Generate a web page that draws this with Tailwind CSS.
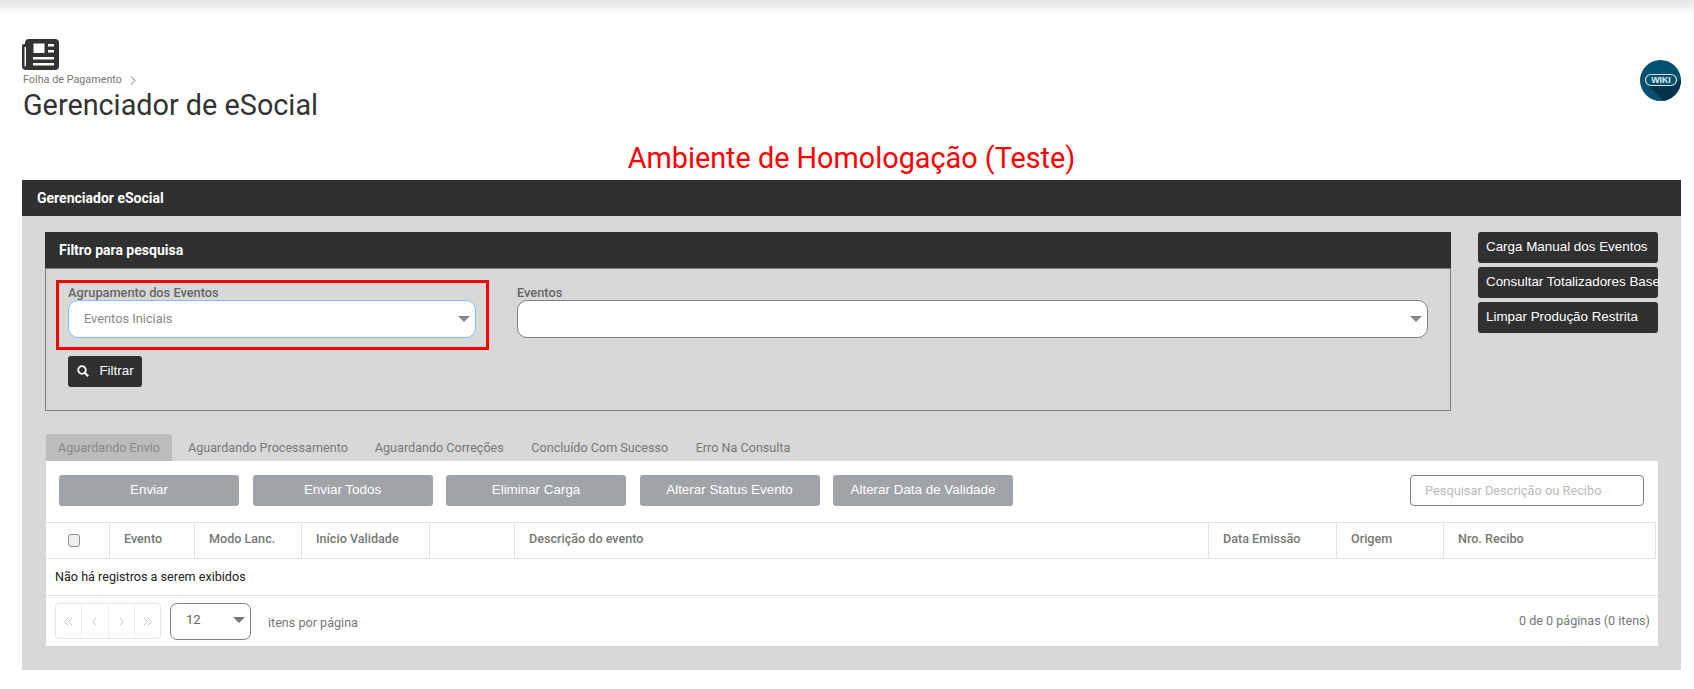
<!DOCTYPE html>
<html lang="pt-BR">
<head>
  <meta charset="UTF-8" />
  <title>Gerenciador de eSocial</title>
  <script src="https://cdn.jsdelivr.net/npm/@tailwindcss/browser@4"></script>
</head>
<body class="bg-white font-['Roboto',sans-serif] text-[#333] overflow-hidden">

  <!-- top shadow -->
  <div class="h-[16px] bg-gradient-to-b from-[#e4e4e4] to-white"></div>

  <div class="pl-[22px] pr-[13px]">

    <!-- page header -->
    <div class="flex justify-between h-[126px] pt-[23px]">
      <div>
        <svg class="w-[37px] h-[32px] text-[#333]" viewBox="0 0 37 32" fill="currentColor" fill-rule="evenodd">
          <path d="M7 0H33a4 4 0 0 1 4 4V27a4 4 0 0 1-4 4H4a4 4 0 0 1-4-4V7a2 2 0 0 1 2-2H3V4a4 4 0 0 1 4-4ZM2.500 8V26.500a1 1 0 0 0 1 1 1 1 0 0 0 .5-1V8ZM11.500 4.500V14H22.500V4.500ZM26 5V7.500H32V5ZM26 11V13.500H32V11ZM11 18V20.500H32V18ZM11 24V26.500H32V24Z"/>
        </svg>
        <div class="flex items-center text-[10.800px] leading-[14px] text-[#777] mt-[2px] pl-[1px]">
          Folha de Pagamento
          <svg class="w-[6px] h-[9px] ml-[8px]" viewBox="0 0 6 9" fill="none" stroke="#777" stroke-width="1"><path d="M1 .5 5 4.500 1 8.500"/></svg>
        </div>
        <h1 class="text-[28.800px] leading-[36px] text-[#333] font-normal pl-[1px]">Gerenciador de eSocial</h1>
      </div>
      <!-- wiki badge -->
      <svg class="w-[41px] h-[41px] mt-[21px]" viewBox="0 0 41 41">
        <defs><clipPath id="wikiClip"><circle cx="20.500" cy="20.500" r="20.500"/></clipPath></defs>
        <circle cx="20.500" cy="20.500" r="20.500" fill="#02516f"/>
        <path clip-path="url(#wikiClip)" d="M8 25H34L41 19V41H24Z" fill="#03334a"/>
        <rect x="5.500" y="14.500" width="31" height="11" rx="5.500" fill="#02516f" stroke="#d5e0e6" stroke-width="1.200"/>
        <text x="21" y="23.300" text-anchor="middle" font-family="Liberation Sans" font-weight="700" font-size="8.800" fill="#e6eef2">WIKI</text>
      </svg>
    </div>

    <!-- environment warning -->
    <div class="h-[38px] text-center text-[28.800px] leading-[32px] text-[#ff0000]">Ambiente de Homologação (Teste)</div>

    <!-- main panel -->
    <div class="bg-[#d8d8d8] h-[490px]">
      <div class="bg-[#303030] h-[36px] pl-[15px] flex items-center text-white text-[14px] font-bold">Gerenciador eSocial</div>

      <div class="pl-[23px] pt-[16px] flex">
        <!-- filter box -->
        <div class="w-[1406px] h-[179px] border border-[#808080] border-t-0">
          <div class="bg-[#303030] h-[36px] -ml-px -mr-px pl-[14px] flex items-center text-white text-[14px] font-bold">Filtro para pesquisa</div>
          <div class="flex pl-[10px] pt-[11px] border-t border-[#808080]">
            <div class="w-[433px] h-[70px] border-[3px] border-[#ff0000] pl-[9px] pt-[2px]">
              <label class="block text-[12.800px] leading-[15px] text-[#666] font-medium">Agrupamento dos Eventos</label>
              <div class="w-[408px] h-[38px] bg-white border border-[#80bdff] rounded-[10px] flex items-center justify-between pl-[15px] pr-[5px] pb-[1px] text-[12.800px] text-[#888]">
                Eventos Iniciais
                <span class="w-0 h-0 border-x-[6px] border-x-transparent border-t-[6px] border-t-[#888]"></span>
              </div>
            </div>
            <div class="ml-[28px] pt-[5px]">
              <label class="block text-[12.800px] leading-[15px] text-[#666] font-medium">Eventos</label>
              <div class="w-[911px] h-[38px] bg-white border border-[#808080] rounded-[10px] flex items-center justify-end pr-[5px]">
                <span class="w-0 h-0 border-x-[6px] border-x-transparent border-t-[6px] border-t-[#888]"></span>
              </div>
            </div>
          </div>
          <button class="ml-[22px] mt-[6px] w-[74px] h-[31px] bg-[#303030] rounded-[3px] text-white text-[13.400px] font-['Liberation_Sans',sans-serif] flex items-center justify-center gap-[10px] pl-[1px]">
            <svg class="w-[12px] h-[12px] -mt-[2px]" viewBox="0 0 12 12" fill="none" stroke="white" stroke-width="1.800"><circle cx="5" cy="5" r="3.800"/><path d="M7.800 7.800 11.200 11.200" stroke-width="2.200"/></svg>
            Filtrar
          </button>
        </div>

        <!-- side actions -->
        <div class="ml-[27px] flex flex-col gap-[4px] font-['Liberation_Sans',sans-serif] text-white text-[13.400px]">
          <button class="w-[180px] h-[31px] bg-[#303030] rounded-[3px] pl-[8px] text-left whitespace-nowrap">Carga Manual dos Eventos</button>
          <button class="w-[180px] h-[31px] bg-[#303030] rounded-[3px] pl-[8px] text-left whitespace-nowrap">Consultar Totalizadores Base</button>
          <button class="w-[180px] h-[31px] bg-[#303030] rounded-[3px] pl-[8px] text-left whitespace-nowrap">Limpar Produção Restrita</button>
        </div>
      </div>

      <!-- tabs -->
      <div class="ml-[24px] mr-[23px] mt-[23px]">
        <div class="flex h-[27px] text-[12.600px] text-[#777] items-stretch">
          <div class="bg-[#bcbcbc] rounded-t-[3px] px-[12px] pt-[2px] flex items-center text-[#888]">Aguardando Envio</div>
          <div class="ml-[3px] px-[13px] pt-[2px] flex items-center">Aguardando Processamento</div>
          <div class="px-[14px] pt-[2px] flex items-center">Aguardando Correções</div>
          <div class="px-[13.500px] pt-[2px] flex items-center">Concluído Com Sucesso</div>
          <div class="px-[14px] pt-[2px] flex items-center">Erro Na Consulta</div>
        </div>

        <div class="bg-white h-[185px]">
          <!-- toolbar -->
          <div class="h-[61px] pt-[14px] pl-[13px] pr-[14px] flex justify-between">
            <div class="flex gap-[13.500px] font-['Liberation_Sans',sans-serif] text-[13.400px] text-white">
              <button class="w-[180px] h-[31px] bg-[#a0a4a8] rounded-[3px]">Enviar</button>
              <button class="w-[180px] h-[31px] bg-[#a0a4a8] rounded-[3px]">Enviar Todos</button>
              <button class="w-[180px] h-[31px] bg-[#a0a4a8] rounded-[3px]">Eliminar Carga</button>
              <button class="w-[180px] h-[31px] bg-[#a0a4a8] rounded-[3px]">Alterar Status Evento</button>
              <button class="w-[180px] h-[31px] bg-[#a0a4a8] rounded-[3px]">Alterar Data de Validade</button>
            </div>
            <div class="w-[234px] h-[31px] border border-[#808080] rounded-[4px] pl-[14px] flex items-center text-[12.800px] text-[#bbb]">Pesquisar Descrição ou Recibo</div>
          </div>

          <!-- table head -->
          <div class="flex h-[37px] border-y border-[#e0e3e6] text-[12.600px] font-medium text-[#777] mr-[2px]">
            <div class="w-[64px] border-r border-[#e0e3e6] flex items-center justify-center pr-[8px]">
              <span class="w-[12px] h-[13px] bg-[#eceef0] border border-[#8a8f95] rounded-[3px]"></span>
            </div>
            <div class="w-[85px] border-r border-[#e0e3e6] pl-[14px] pb-[3px] flex items-center">Evento</div>
            <div class="w-[107px] border-r border-[#e0e3e6] pl-[14px] pb-[3px] flex items-center">Modo Lanc.</div>
            <div class="w-[128px] border-r border-[#e0e3e6] pl-[14px] pb-[3px] flex items-center">Início Validade</div>
            <div class="w-[85px] border-r border-[#e0e3e6]"></div>
            <div class="w-[694px] border-r border-[#e0e3e6] pl-[14px] pb-[3px] flex items-center">Descrição do evento</div>
            <div class="w-[128px] border-r border-[#e0e3e6] pl-[14px] pb-[3px] flex items-center">Data Emissão</div>
            <div class="w-[107px] border-r border-[#e0e3e6] pl-[14px] pb-[3px] flex items-center">Origem</div>
            <div class="flex-1 border-r border-[#e0e3e6] pl-[14px] pb-[3px] flex items-center">Nro. Recibo</div>
          </div>

          <div class="h-[37px] pl-[9px] flex items-center text-[12.600px] text-[#222] border-b border-[#e0e3e6]">Não há registros a serem exibidos</div>

          <!-- pager -->
          <div class="h-[50px] pl-[9px] pr-[8px] flex items-center text-[12.600px] text-[#777]">
            <div class="flex w-[106px] h-[36px] border border-[#e4e7ea] rounded-[4px] text-[#c4c4c4]">
              <span class="flex-1 flex items-center justify-center border-r border-[#eceef0]">
                <svg class="w-[9px] h-[9px]" viewBox="0 0 9 9" fill="none" stroke="currentColor"><path d="M4.500 .5 .5 4.500 4.500 8.500M8.500 .5 4.500 4.500 8.500 8.500"/></svg>
              </span>
              <span class="flex-1 flex items-center justify-center border-r border-[#eceef0]">
                <svg class="w-[5px] h-[9px]" viewBox="0 0 5 9" fill="none" stroke="currentColor"><path d="M4.500 .5 .5 4.500 4.500 8.500"/></svg>
              </span>
              <span class="flex-1 flex items-center justify-center border-r border-[#eceef0]">
                <svg class="w-[5px] h-[9px]" viewBox="0 0 5 9" fill="none" stroke="currentColor"><path d="M.5 .5 4.500 4.500 .5 8.500"/></svg>
              </span>
              <span class="flex-1 flex items-center justify-center">
                <svg class="w-[9px] h-[9px]" viewBox="0 0 9 9" fill="none" stroke="currentColor"><path d="M.5 .5 4.500 4.500 .5 8.500M4.500 .5 8.500 4.500 4.500 8.500"/></svg>
              </span>
            </div>
            <div class="ml-[9px] w-[81px] h-[37px] border border-[#808080] rounded-[7px] pl-[15px] pr-[5px] pb-[2px] flex items-center justify-between text-[13px] text-[#666]">
              12
              <span class="w-0 h-0 border-x-[6px] border-x-transparent border-t-[6px] border-t-[#777]"></span>
            </div>
            <span class="ml-[17px] mt-[5px]">itens por página</span>
            <span class="ml-auto">0 de 0 páginas (0 itens)</span>
          </div>
        </div>
      </div>
    </div>
  </div>
</body>
</html>
